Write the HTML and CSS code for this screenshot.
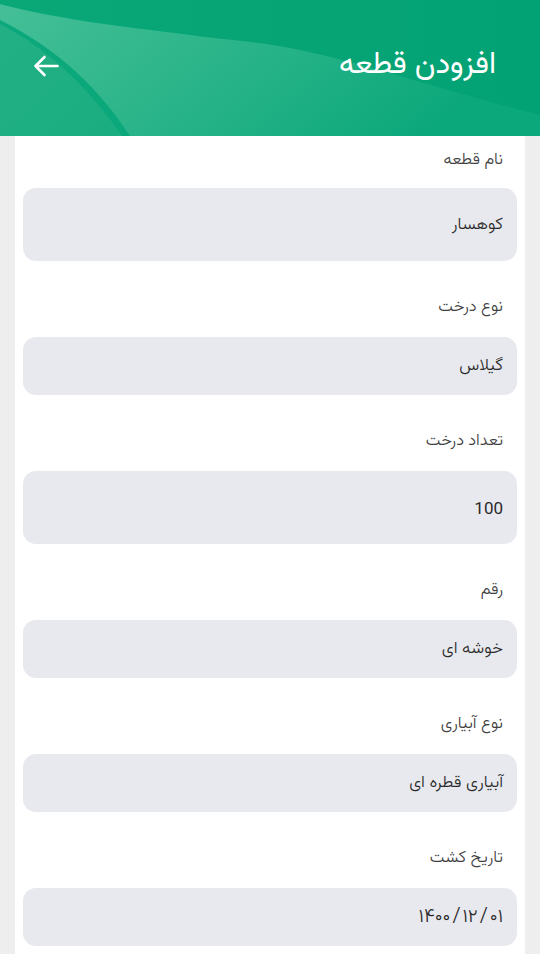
FILE: index.html
```html
<!DOCTYPE html>
<html lang="fa" dir="rtl">
<head>
<meta charset="utf-8">
<title>افزودن قطعه</title>
<link rel="stylesheet" href="styles.css">
</head>
<body>
<header class="appbar">
  <svg class="appbar-bg" viewBox="0 0 540 136" preserveAspectRatio="none" aria-hidden="true">
    <defs>
      <linearGradient id="band" x1="0" y1="0" x2="1" y2="0.3">
        <stop offset="0" stop-color="#45bf97"/>
        <stop offset="0.45" stop-color="#2db58a"/>
        <stop offset="1" stop-color="#0ba87b"/>
      </linearGradient>
      <linearGradient id="top" x1="0" y1="0" x2="1" y2="0">
        <stop offset="0" stop-color="#0aa777"/>
        <stop offset="1" stop-color="#03a274"/>
      </linearGradient>
      <linearGradient id="low" x1="0" y1="0" x2="1" y2="1">
        <stop offset="0" stop-color="#22b084"/>
        <stop offset="1" stop-color="#1aad80"/>
      </linearGradient>
    </defs>
    <rect width="540" height="136" fill="#0ba87b"/>
    <path d="M0 4 C60 20 140 30 230 38 C320 46 400 80 540 110 L540 136 L130 136 C100 90 60 50 0 20 Z" fill="url(#band)"/>
    <path d="M0 24 C50 50 90 90 122 136 L0 136 Z" fill="url(#low)"/>
    <path d="M0 0 L540 0 L540 115 C420 85 330 50 250 42 C160 32 70 20 0 4 Z" fill="url(#top)"/>
  </svg>
  <h1 class="title">افزودن قطعه</h1>
  <button class="back" aria-label="بازگشت">
    <svg viewBox="0 0 26 22" width="26" height="22" aria-hidden="true">
      <path d="M24.5 11 H2.5 M11.5 2 L2.5 11 L11.5 20" fill="none" stroke="#ffffff" stroke-width="2.6" stroke-linecap="round" stroke-linejoin="round"/>
    </svg>
  </button>
</header>
<main class="card">
  <div class="field first">
    <label class="label">نام قطعه</label>
    <div class="input tall">کوهسار</div>
  </div>
  <div class="field">
    <label class="label">نوع درخت</label>
    <div class="input">گیلاس</div>
  </div>
  <div class="field">
    <label class="label">تعداد درخت</label>
    <div class="input tall latin">100</div>
  </div>
  <div class="field">
    <label class="label">رقم</label>
    <div class="input">خوشه ای</div>
  </div>
  <div class="field">
    <label class="label">نوع آبیاری</label>
    <div class="input">آبیاری قطره ای</div>
  </div>
  <div class="field">
    <label class="label">تاریخ کشت</label>
    <div class="input"><span class="date">۱۴۰۰<span class="sep">/</span>۱۲<span class="sep">/</span>۰۱</span></div>
  </div>
</main>
</body>
</html>
```
FILE: styles.css
```css
* { box-sizing: border-box; }
html, body { margin: 0; padding: 0; }
body {
  background: #eeeeee;
  font-family: "Vazirmatn", "Noto Sans Arabic", "DejaVu Sans", sans-serif;
  color: #2b2b2b;
  width: 540px;
  height: 954px;
  overflow: hidden;
}
.appbar {
  position: relative;
  height: 136px;
  display: flex;
  align-items: center;
  justify-content: space-between;
  padding: 0 44px 4px 30px;
  overflow: hidden;
}
.appbar-bg {
  position: absolute;
  inset: 0;
  width: 100%;
  height: 100%;
  z-index: 0;
}
.title {
  position: relative;
  z-index: 1;
  margin: 0;
  color: #ffffff;
  font-size: 30.5px;
  font-weight: normal;
  line-height: 40px;
}
.back {
  position: relative;
  z-index: 1;
  background: none;
  border: 0;
  padding: 0;
  width: 32px;
  height: 32px;
  display: flex;
  align-items: center;
  justify-content: center;
}
.card {
  margin: 0 15px;
  background: #ffffff;
  padding: 12px 8px 0 8px;
  min-height: 818px;
}
.field {
  display: flex;
  flex-direction: column;
}
.label {
  font-size: 16.5px;
  font-weight: 350;
  line-height: 24px;
  height: 24px;
  color: #404040;
  padding-right: 14px;
  margin-bottom: 18px;
}
.field.first .label { margin-bottom: 16px; }
.field + .field { margin-top: 34px; }
.input {
  height: 58px;
  background: #e8e9ee;
  border-radius: 13px;
  display: flex;
  align-items: center;
  padding-right: 14px;
  font-size: 17px;
  font-weight: 350;
  color: #2a2a2a;
}
.input.tall { height: 73px; }
.latin { font-family: "Roboto", "Liberation Sans", sans-serif; font-size: 17px; font-weight: 400; }
.date { font-size: 19px; direction: ltr; unicode-bidi: isolate; }
.sep { margin: 0 2px; font-size: 20px; }
```
